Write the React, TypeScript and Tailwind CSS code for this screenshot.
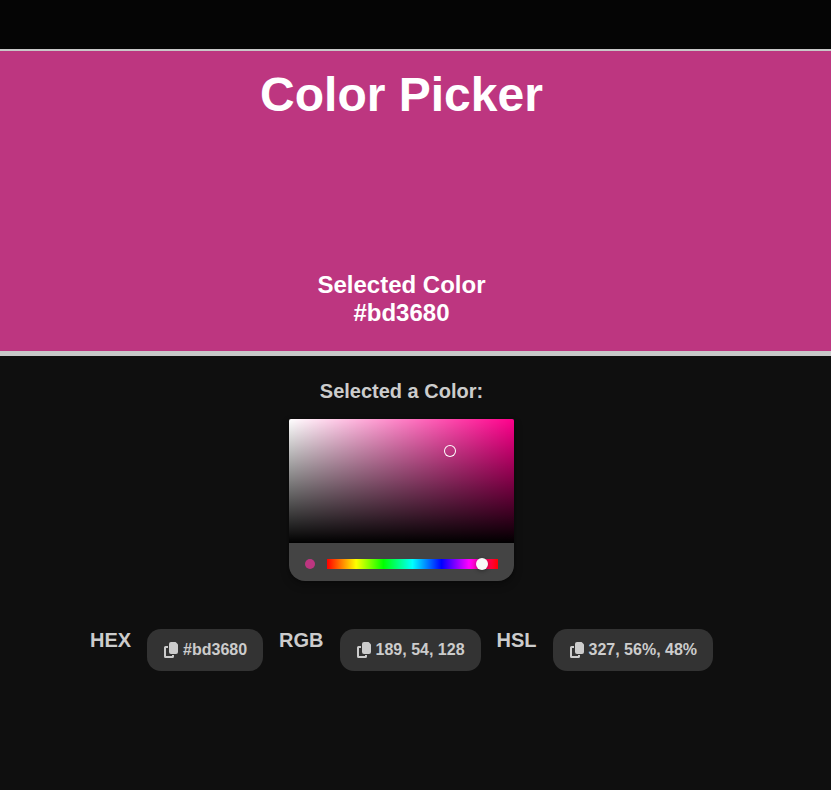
import { useState, type PointerEvent } from "react";

type Hsv = { h: number; s: number; v: number };

function toRgb({ h, s, v }: Hsv): number[] {
  const channel = (n: number) => {
    const k = (n + h / 60) % 6;
    return Math.round(255 * (v - v * s * Math.max(0, Math.min(k, 4 - k, 1))));
  };
  return [channel(5), channel(3), channel(1)];
}

function toHex(rgb: number[]): string {
  return "#" + rgb.map((n) => n.toString(16).padStart(2, "0")).join("");
}

function toHsl({ h, s, v }: Hsv): string {
  const l = v * (1 - s / 2);
  const sat = l === 0 || l === 1 ? 0 : (v - l) / Math.min(l, 1 - l);
  return `${Math.round(h)}, ${Math.round(sat * 100)}%, ${Math.round(l * 100)}%`;
}

function CopyIcon() {
  return (
    <svg viewBox="0 0 16 16" className="h-4 w-4" aria-hidden="true">
      <path
        fill="currentColor"
        d="M8 0h4c.4 0 .8.2 1.1.4l1.5 1.5c.2.3.4.7.4 1.1V10a2 2 0 0 1-2 2H8a2 2 0 0 1-2-2V2a2 2 0 0 1 2-2z"
      />
      <path
        fill="currentColor"
        d="M2.5 4H5v2H3v8h6v-1h2v1.5a1.5 1.5 0 0 1-1.5 1.5h-7A1.5 1.5 0 0 1 1 14.5v-9A1.5 1.5 0 0 1 2.5 4z"
      />
    </svg>
  );
}

function CopyField({ label, value }: { label: string; value: string }) {
  return (
    <div className="flex items-start gap-4">
      <h3 className="text-xl leading-[22px] font-bold">{label}</h3>
      <button
        type="button"
        aria-label={`Copy ${label} ${value}`}
        onClick={() => navigator.clipboard?.writeText(value)}
        className="flex cursor-pointer items-center gap-1 rounded-[14px] bg-[#333333] px-4 py-3 text-base leading-[18px] font-bold whitespace-nowrap"
      >
        <CopyIcon />
        {value}
      </button>
    </div>
  );
}

function Picker({ color, onChange }: { color: Hsv; onChange: (c: Hsv) => void }) {
  const pick = (e: PointerEvent<HTMLDivElement>) => {
    if (e.buttons !== 1) return;
    const box = e.currentTarget.getBoundingClientRect();
    const clamp = (n: number) => Math.max(0, Math.min(1, n));
    onChange({
      h: color.h,
      s: clamp((e.clientX - box.left) / box.width),
      v: 1 - clamp((e.clientY - box.top) / box.height),
    });
  };

  return (
    <div className="w-[225px] rounded-t-xs rounded-b-2xl bg-[#444444] shadow-[0_0_2px_rgba(0,0,0,0.3),0_4px_8px_rgba(0,0,0,0.3)]">
      <div
        onPointerDown={pick}
        onPointerMove={pick}
        className="relative h-[124px] rounded-t-xs"
        style={{
          background: `linear-gradient(to top, #000, transparent), linear-gradient(to right, #fff, rgba(255,255,255,0)), hsl(${color.h} 100% 50%)`,
        }}
      >
        <span
          className="absolute size-3 -translate-x-1/2 -translate-y-1/2 rounded-full shadow-[inset_0_0_0_1px_#fff]"
          style={{ left: `${color.s * 100}%`, top: `${(1 - color.v) * 100}%` }}
        />
      </div>
      <div className="flex items-center gap-3 px-4 pt-4 pb-3">
        <span className="size-[10px] rounded-full" style={{ backgroundColor: toHex(toRgb(color)) }} />
        <div className="relative h-[10px] flex-1 bg-[linear-gradient(to_right,#f00_0%,#ff0_17%,#0f0_33%,#0ff_50%,#00f_67%,#f0f_83%,#f00_100%)]">
          <input
            type="range"
            aria-label="Hue"
            min={0}
            max={359}
            value={Math.round(color.h)}
            onChange={(e) => onChange({ ...color, h: Number(e.target.value) })}
            className="absolute inset-0 h-full w-full cursor-pointer opacity-0"
          />
          <span
            className="pointer-events-none absolute top-1/2 size-3 -translate-x-1/2 -translate-y-1/2 rounded-full bg-[#f8f8f8] shadow-[0_1px_4px_rgba(0,0,0,0.37)]"
            style={{ left: `${(color.h / 360) * 100}%` }}
          />
        </div>
      </div>
    </div>
  );
}

export default function App() {
  const [color, setColor] = useState<Hsv>({ h: 327.1, s: 0.7143, v: 0.7412 });
  const rgb = toRgb(color);
  const hex = toHex(rgb);

  return (
    <div className="min-h-screen bg-[#0f0f0f] font-['Liberation_Sans',Arial,sans-serif] text-[#cccccc]">
      <div className="h-[49px] bg-[#050505]" />
      <header
        className="flex h-[307px] flex-col items-center justify-between border-t-2 border-b-5 border-[#c8c8c8] pt-4 pr-7 pb-6 text-center font-bold text-white"
        style={{ backgroundColor: hex }}
      >
        <h1 className="text-5xl leading-[56px]">Color Picker</h1>
        <h2 className="text-2xl leading-7">
          Selected Color
          <br />
          {hex}
        </h2>
      </header>
      <main className="flex flex-col items-center pt-6 pr-7">
        <h3 className="mb-4 text-xl leading-[23px] font-bold">Selected a Color:</h3>
        <Picker color={color} onChange={setColor} />
        <div className="mt-12 flex flex-wrap justify-center gap-4">
          <CopyField label="HEX" value={hex} />
          <CopyField label="RGB" value={rgb.join(", ")} />
          <CopyField label="HSL" value={toHsl(color)} />
        </div>
      </main>
    </div>
  );
}
